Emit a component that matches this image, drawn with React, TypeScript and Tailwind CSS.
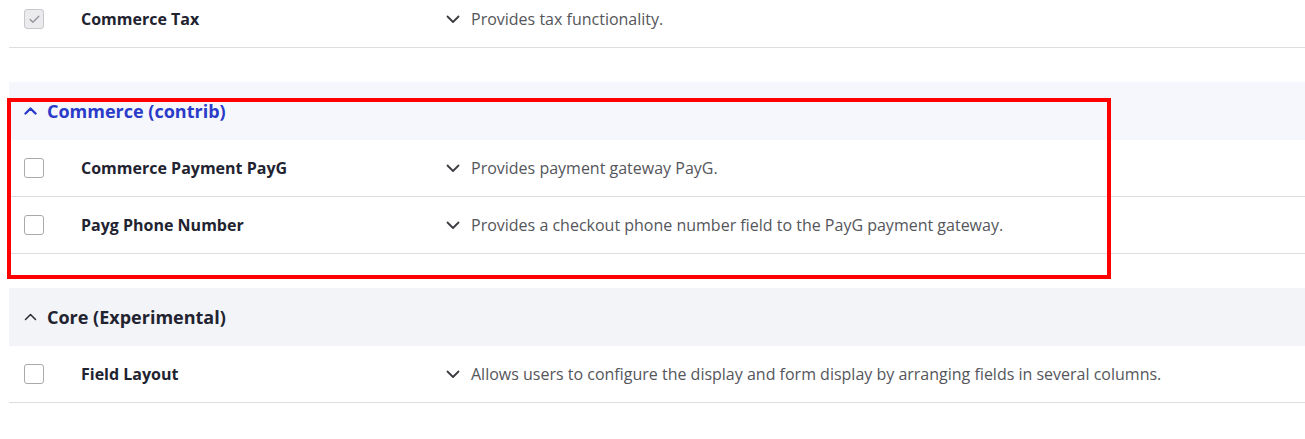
import { Check } from "lucide-react";

type Module = { name: string; description: string; checked?: boolean; disabled?: boolean };

function ChevronDown() {
  return (
    <svg width="14" height="9" viewBox="0 0 14 9" fill="none" className="shrink-0 mt-[1px]">
      <path d="M1.5 1.5 L7 7 L12.5 1.5" stroke="#3b3c40" strokeWidth="1.8" strokeLinecap="round" strokeLinejoin="round" />
    </svg>
  );
}

function ChevronUp({ active }: { active?: boolean }) {
  return (
    <svg width="13" height="8" viewBox="0 0 13 8" fill="none" className="shrink-0">
      <path
        d="M1.5 6.5 L6.5 1.5 L11.5 6.5"
        stroke={active ? "#2a3bc9" : "#2b2c33"}
        strokeWidth={active ? 2.4 : 1.5}
        strokeLinecap="round"
        strokeLinejoin="round"
      />
    </svg>
  );
}

function ModuleRow({ module }: { module: Module }) {
  return (
    <div className="flex items-center h-[57px] border-b border-[#dcdde1]">
      <div className="w-[72px] pl-[15px] shrink-0">
        {module.disabled ? (
          <span className="flex items-center justify-center w-[20px] h-[20px] rounded-[3px] border border-[#c8c8cc] bg-[#ebebed]">
            <Check size={13} strokeWidth={2.2} color="#8d8e93" />
          </span>
        ) : (
          <span className="block w-[20px] h-[20px] rounded-[3px] border border-[#a9aaae] bg-white" />
        )}
      </div>
      <div className="w-[365px] shrink-0 text-[16px] font-bold text-[#222330]">{module.name}</div>
      <div className="flex items-center gap-[11px] text-[16px] text-[#55565b]">
        <ChevronDown />
        <span>{module.description}</span>
      </div>
    </div>
  );
}

function Group({ title, active, modules }: { title: string; active?: boolean; modules: Module[] }) {
  return (
    <section className="mt-[34px]">
      <div
        className={
          active
            ? "flex items-center gap-[10px] h-[58px] pl-[15px] bg-[#f6f7fc] text-[#2a3bc9]"
            : "flex items-center gap-[10px] h-[58px] pl-[15px] bg-[#f3f4f8] text-[#222330]"
        }
      >
        <ChevronUp active={active} />
        <span className="text-[18px] font-bold">{title}</span>
      </div>
      {modules.map((m) => (
        <ModuleRow key={m.name} module={m} />
      ))}
    </section>
  );
}

export default function App() {
  return (
    <div className="relative w-[1305px] h-[439px] overflow-hidden bg-white" style={{ fontFamily: '"Open Sans", "Noto Sans", sans-serif' }}>
      <div className="pl-[9px] -mt-[9px]">
        <ModuleRow module={{ name: "Commerce Tax", description: "Provides tax functionality.", checked: true, disabled: true }} />
        <Group
          title="Commerce (contrib)"
          active
          modules={[
            { name: "Commerce Payment PayG", description: "Provides payment gateway PayG." },
            { name: "Payg Phone Number", description: "Provides a checkout phone number field to the PayG payment gateway." },
          ]}
        />
        <Group
          title="Core (Experimental)"
          modules={[
            {
              name: "Field Layout",
              description: "Allows users to configure the display and form display by arranging fields in several columns.",
            },
          ]}
        />
      </div>

      {/* annotation box */}
      <div className="absolute left-[7px] top-[98px] w-[1104px] h-[181px] border-[4px] border-[#ff0000] pointer-events-none" />
    </div>
  );
}
